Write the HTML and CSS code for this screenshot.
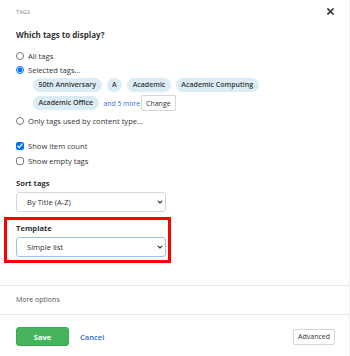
FILE: index.html
```html
<!DOCTYPE html>
<html lang="en">
    <head>
        <link rel="stylesheet" href="styles.css">
        <meta charset="UTF-8">
        <title>Tags</title>
    </head>
    <body>
    <div class="dialog">
        <div class="head">
            <span class="head-title">Tags</span>
            <button class="close" type="button" aria-label="Close">
                <svg width="7" height="7" viewBox="0 0 7 7"><path d="M1 1L6 6M6 1L1 6" stroke="#333" stroke-width="1.6" stroke-linecap="square"/></svg>
            </button>
        </div>
        <div class="body">
            <div class="question">Which tags to display?</div>
            <label class="opt"><input type="radio" name="show" value="all"> All tags</label>
            <label class="opt"><input type="radio" name="show" value="selected" checked> Selected tags...</label>
            <div class="chips">
                <span class="chip">50th Anniversary</span>
                <span class="chip">A</span>
                <span class="chip">Academic</span>
                <span class="chip">Academic Computing</span>
                <span class="chip">Academic Office</span>
                <a class="more-link" href="#">and 5 more</a>
                <button class="small-btn" type="button">Change</button>
            </div>
            <label class="opt opt-last"><input type="radio" name="show" value="type"> Only tags used by content type...</label>

            <label class="opt check-first"><input type="checkbox" checked> Show item count</label>
            <label class="opt"><input type="checkbox"> Show empty tags</label>

            <div class="field sort-field">
                <label class="field-label" for="sort">Sort tags</label>
                <div class="select-wrap">
                    <select id="sort" class="select">
                        <option>By Title (A-Z)</option>
                    </select>
                    <svg class="chevron" width="6" height="4" viewBox="0 0 6 4"><path d="M0.8 0.8L3 3L5.2 0.8" fill="none" stroke="#333" stroke-width="1.2"/></svg>
                </div>
            </div>
            <div class="field highlight">
                <label class="field-label" for="template">Template</label>
                <div class="select-wrap">
                    <select id="template" class="select focused">
                        <option>Simple list</option>
                    </select>
                    <svg class="chevron" width="6" height="4" viewBox="0 0 6 4"><path d="M0.8 0.8L3 3L5.2 0.8" fill="none" stroke="#333" stroke-width="1.2"/></svg>
                </div>
            </div>
        </div>
        <div class="more">More options</div>
        <div class="foot">
            <button class="save" type="button">Save</button>
            <a class="cancel" href="#">Cancel</a>
            <button class="small-btn advanced" type="button">Advanced</button>
        </div>
    </div>
    </body>
</html>
```

FILE: styles.css
```css
body {
    margin: 0;
    background: #fff;
    font-family: "Open Sans", "Liberation Sans", sans-serif;
    font-size: 7.6px;
    color: #333;
}
.dialog {
    width: 350px;
    height: 356px;
    display: flex;
    flex-direction: column;
    border-right: 1px solid #f0f0f0;
    box-sizing: border-box;
}
.head {
    height: 24px;
    display: flex;
    align-items: center;
    justify-content: space-between;
    padding: 0 15px 0 16px;
}
.head-title {
    text-transform: uppercase;
    font-size: 5.6px;
    color: #888;
    letter-spacing: 0.1px;
}
.close {
    border: 0;
    background: none;
    padding: 0;
    display: flex;
    margin-top: -2px;
}
.body {
    padding: 5px 16px 0 16px;
    display: flex;
    flex-direction: column;
    align-items: flex-start;
}
.question {
    font-weight: 700;
    font-size: 8px;
    line-height: 12px;
    margin-bottom: 8px;
}
.opt {
    display: flex;
    align-items: center;
    height: 14px;
    gap: 4px;
}
.opt input {
    margin: 0;
    width: 8px;
    height: 8px;
}
.opt-last {
    margin-top: 3px;
}
.check-first {
    margin-top: 11px;
    margin-bottom: 1px;
}
.chips {
    display: flex;
    flex-wrap: wrap;
    align-items: center;
    column-gap: 5px;
    row-gap: 2px;
    padding-left: 17px;
    width: 260px;
}
.chip {
    height: 14px;
    line-height: 14px;
    padding: 0 5.5px;
    border-radius: 7px;
    background: #dcecf5;
    font-weight: 600;
    font-size: 7px;
    margin: 1px 0;
}
.more-link {
    color: #2f6fd0;
    text-decoration: none;
    font-size: 6.8px;
    margin-right: -4px;
}
.small-btn {
    font-family: inherit;
    font-size: 7px;
    color: #333;
    background: #fff;
    border: 1px solid #d6d6d6;
    border-radius: 2px;
    height: 16px;
    padding: 0 4px;
}
.field {
    display: flex;
    flex-direction: column;
    align-items: flex-start;
}
.field-label {
    font-weight: 700;
    line-height: 12px;
    margin-bottom: 3px;
}
.sort-field {
    margin-top: 9px;
}
.select-wrap {
    position: relative;
    display: flex;
}
.select {
    appearance: none;
    width: 150px;
    height: 20px;
    font-family: inherit;
    font-size: 7.6px;
    color: #333;
    border: 1px solid #d6d6d6;
    border-radius: 3px;
    background: #fff;
    padding: 0 0 0 10px;
}
.select.focused {
    border-color: #9cc3ea;
}
.chevron {
    position: absolute;
    right: 3px;
    top: 8px;
    pointer-events: none;
}
.highlight {
    margin: 5px 0 0 -12px;
    width: 167px;
    box-sizing: border-box;
    border: 3px solid #f00;
    padding: 2px 2px 3px 9px;
}
.more {
    margin-top: 22px;
    border-top: 1px solid #e9e9e9;
    border-bottom: 1px solid #e9e9e9;
    height: 28px;
    line-height: 28px;
    padding-left: 16px;
    color: #555;
    font-size: 7px;
}
.foot {
    display: flex;
    align-items: center;
    padding: 12px 14px 0 16px;
}
.save {
    width: 53px;
    height: 19px;
    background: #45b45d;
    border: 1px solid #3aa852;
    border-radius: 3px;
    color: #fff;
    font-family: inherit;
    font-weight: 700;
    font-size: 7.6px;
}
.cancel {
    color: #2f6fd0;
    text-decoration: none;
    margin-left: 11px;
    font-weight: 600;
}
.advanced {
    margin-left: auto;
}
```
